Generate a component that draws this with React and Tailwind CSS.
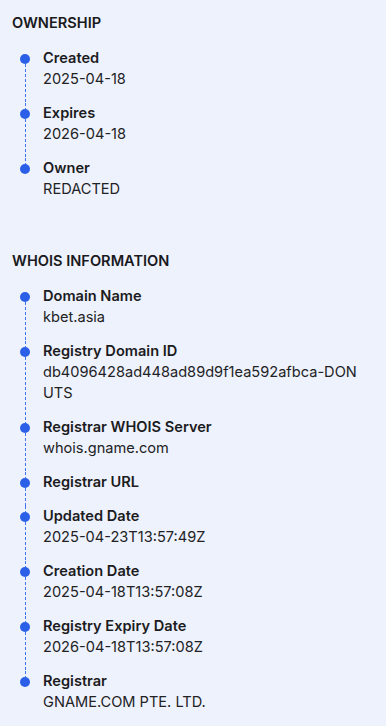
const ownership = [
  { label: "Created", value: "2025-04-18" },
  { label: "Expires", value: "2026-04-18" },
  { label: "Owner", value: "REDACTED" },
];

const whois = [
  { label: "Domain Name", value: "kbet.asia" },
  {
    label: "Registry Domain ID",
    value: "db4096428ad448ad89d9f1ea592afbca-DONUTS",
  },
  { label: "Registrar WHOIS Server", value: "whois.gname.com" },
  { label: "Registrar URL", value: "" },
  { label: "Updated Date", value: "2025-04-23T13:57:49Z" },
  { label: "Creation Date", value: "2025-04-18T13:57:08Z" },
  { label: "Registry Expiry Date", value: "2026-04-18T13:57:08Z" },
  { label: "Registrar", value: "GNAME.COM PTE. LTD." },
];

const dashed =
  "w-px bg-[repeating-linear-gradient(to_bottom,#3d72f0_0px,#3d72f0_3px,transparent_3px,transparent_5px)]";

const TimelineItem = ({ label, value, first, last }) => (
  <div className="flex pl-[20px]">
    <div className="flex flex-col items-center w-[10px] shrink-0">
      <div className={first ? "h-[6px]" : `h-[6px] ${dashed}`} />
      <div className="w-[10px] h-[10px] rounded-full bg-[#2b5fe8] shrink-0" />
      <div className={last ? "flex-1" : `flex-1 ${dashed}`} />
    </div>
    <div className={`pl-[13px] pr-[20px] min-w-0 ${last ? "" : "pb-[13px]"}`}>
      <div className="text-[14.6px] leading-[21px] font-semibold text-[#1c1c1e]">
        {label}
      </div>
      {value && (
        <div className="text-[14.6px] leading-[21px] text-[#222224] break-all">
          {value}
        </div>
      )}
    </div>
  </div>
);

const Section = ({ title, items, className }) => (
  <div className={className}>
    <h2 className="px-3 text-[14.6px] leading-[21px] font-semibold uppercase text-[#1a1a1c]">
      {title}
    </h2>
    <div className="mt-[14px]">
      {items.map((item, i) => (
        <TimelineItem
          key={item.label}
          label={item.label}
          value={item.value}
          first={i === 0}
          last={i === items.length - 1}
        />
      ))}
    </div>
  </div>
);

const App = () => {
  return (
    <div className="min-h-[726px] w-full bg-[#eef2fd] font-['Inter',sans-serif] pt-[13px]">
      <Section title="Ownership" items={ownership} />
      <Section title="Whois Information" items={whois} className="mt-[51px]" />
    </div>
  );
};

export default App;
